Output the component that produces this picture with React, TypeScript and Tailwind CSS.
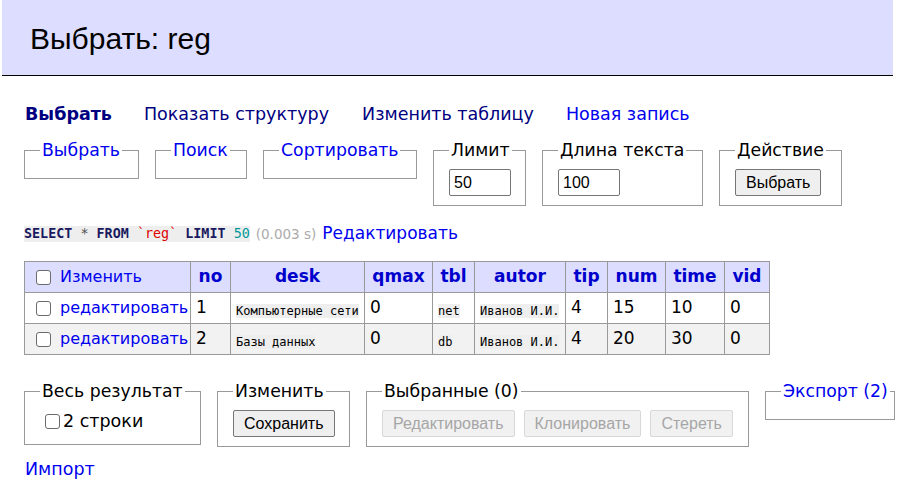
import React from "react";

const V = { fontFamily: '"DejaVu Sans", Verdana, sans-serif' };
const A = { fontFamily: '"Liberation Sans", Arial, sans-serif' };
const M = { fontFamily: '"DejaVu Sans Mono", "Liberation Mono", monospace' };

function Box() {
  return (
    <span className="inline-block w-[15px] h-[15px] border border-[#6b6b6b] rounded-[3px] bg-white align-middle shrink-0" />
  );
}

function FS({
  legend,
  link,
  children,
  className = "",
}: {
  legend: string;
  link?: boolean;
  children?: React.ReactNode;
  className?: string;
}) {
  return (
    <fieldset className={"border border-[#999] pl-[15px] pt-[9px] pb-[9px] min-w-0 " + className}>
      <legend
        className={"px-[2px] leading-[20px] text-[17.3px] whitespace-nowrap " + (link ? "text-[#0000ee]" : "text-black")}
        style={V}
      >
        {legend}
      </legend>
      {children}
    </fieldset>
  );
}

function Btn({ children, disabled }: { children: React.ReactNode; disabled?: boolean }) {
  return (
    <button
      className={
        "h-[27px] px-[10px] rounded-[2px] border text-[16px] leading-none " +
        (disabled ? "bg-[#f1f1f1] border-[#d8d8d8] text-[#a6a6a6]" : "bg-[#efefef] border-[#767676] text-black")
      }
      style={A}
    >
      {children}
    </button>
  );
}

function Input({ value }: { value: string }) {
  return (
    <div
      className="w-[62px] h-[27px] border border-[#767676] rounded-[2px] bg-white flex items-center pl-[4px] text-[16px] text-black"
      style={A}
    >
      {value}
    </div>
  );
}

const cols = [
  { n: "no", w: 40 },
  { n: "desk", w: 134 },
  { n: "qmax", w: 68 },
  { n: "tbl", w: 42 },
  { n: "autor", w: 91 },
  { n: "tip", w: 42 },
  { n: "num", w: 58 },
  { n: "time", w: 59 },
  { n: "vid", w: 45 },
];

const rows = [
  ["1", "Компьютерные сети", "0", "net", "Иванов И.И.", "4", "15", "10", "0"],
  ["2", "Базы данных", "0", "db", "Иванов И.И.", "4", "20", "30", "0"],
];
const codeCols = [1, 3, 4];

export default function App() {
  return (
    <div className="w-[919px] h-[497px] bg-white overflow-hidden text-black" style={V}>
      <div className="ml-[2px] w-[891px] h-[76px] bg-[#ddf] border-b border-black flex items-center pl-[28px]">
        <h2
          className="text-[30px] leading-none text-black pt-[2px]"
          style={{ fontFamily: '"Liberation Sans", Tahoma, sans-serif' }}
        >
          Выбрать: reg
        </h2>
      </div>

      <div className="pl-[24px]">
        <div className="mt-[28px] flex items-center text-[17.5px] leading-[20px] pl-[1px]">
          <span className="font-bold text-[#000080]">Выбрать</span>
          <span className="ml-[32px] text-[#000080]">Показать структуру</span>
          <span className="ml-[33px] text-[#000080]">Изменить таблицу</span>
          <span className="ml-[32px] text-[#0000ee]">Новая запись</span>
        </div>

        <div className="mt-[16px] flex items-start gap-[16px]">
          <FS legend="Выбрать" link className="w-[115px] pr-[15px]" />
          <FS legend="Поиск" link className="w-[92px] pr-[15px]" />
          <FS legend="Сортировать" link className="w-[154px] pr-[15px]" />
          <FS legend="Лимит" className="w-[93px] pr-[14px]">
            <Input value="50" />
          </FS>
          <FS legend="Длина текста" className="w-[161px] pr-[14px]">
            <Input value="100" />
          </FS>
          <FS legend="Действие" className="w-[123px] pr-[14px]">
            <Btn>Выбрать</Btn>
          </FS>
        </div>

        <div className="mt-[18px] flex items-center h-[20px]">
          <code className="bg-[#eee] text-[13.4px] leading-[16px] px-0" style={M}>
            <b className="text-[#1a1a60]">SELECT</b> <span className="text-[#555]">*</span>{" "}
            <b className="text-[#1a1a60]">FROM</b> <span className="text-[#d00]">`reg`</span>{" "}
            <b className="text-[#1a1a60]">LIMIT</b> <span className="text-[#099]">50</span>
          </code>
          <span className="ml-[6px] text-[13.5px] text-[#aaa]">(0.003 s)</span>
          <span className="ml-[6px] text-[17px] text-[#0000ee]">Редактировать</span>
        </div>

        <table className="mt-[17px] border-collapse table-fixed w-[746px] text-[16px]">
          <colgroup>
            <col style={{ width: 166 }} />
            {cols.map((c) => (
              <col key={c.n} style={{ width: c.w }} />
            ))}
          </colgroup>
          <thead>
            <tr className="h-[31px] bg-[#ddf]">
              <td className="border border-[#999] px-[5px] py-0">
                <div className="flex items-center pl-[6px] gap-[9px] text-[#0000ee]">
                  <Box />
                  <span>Изменить</span>
                </div>
              </td>
              {cols.map((c) => (
                <th key={c.n} className="border border-[#999] px-0 py-0 text-center font-bold text-[#0000cc] text-[17px]">
                  {c.n}
                </th>
              ))}
            </tr>
          </thead>
          <tbody>
            {rows.map((r, i) => (
              <tr key={i} className={"h-[31px] " + (i % 2 ? "bg-[#f2f2f2]" : "bg-white")}>
                <td className="border border-[#999] px-[5px] py-0">
                  <div className="flex items-center pl-[6px] gap-[9px] text-[#0000ee]">
                    <Box />
                    <span>редактировать</span>
                  </div>
                </td>
                {r.map((v, j) => (
                  <td key={j} className="border border-[#999] px-[5px] py-0 whitespace-nowrap">
                    {codeCols.includes(j) ? (
                      <code className="bg-[#eee] text-[12px] leading-[16px] relative top-[2px]" style={M}>
                        {v}
                      </code>
                    ) : (
                      <span className="text-[17px]">{v}</span>
                    )}
                  </td>
                ))}
              </tr>
            ))}
          </tbody>
        </table>

        <div className="mt-[26px] flex items-start gap-[16px]">
          <FS legend="Весь результат" className="w-[177px] pr-[15px] !pb-[12px]">
            <div className="flex items-center gap-[3px] pl-[5px] text-[17.5px] leading-[22px]">
              <Box />
              <span>2 строки</span>
            </div>
          </FS>
          <FS legend="Изменить" className="w-[133px] pr-[15px]">
            <Btn>Сохранить</Btn>
          </FS>
          <FS legend="Выбранные (0)" className="pr-[15px]">
            <div className="flex gap-[9px]">
              <Btn disabled>Редактировать</Btn>
              <Btn disabled>Клонировать</Btn>
              <Btn disabled>Стереть</Btn>
            </div>
          </FS>
          <FS legend="Экспорт (2)" link className="pr-[4px]" />
        </div>

        <div className="mt-[11px] text-[17.5px] leading-[22px] text-[#0000ee] pl-[1px]">Импорт</div>
      </div>
    </div>
  );
}
